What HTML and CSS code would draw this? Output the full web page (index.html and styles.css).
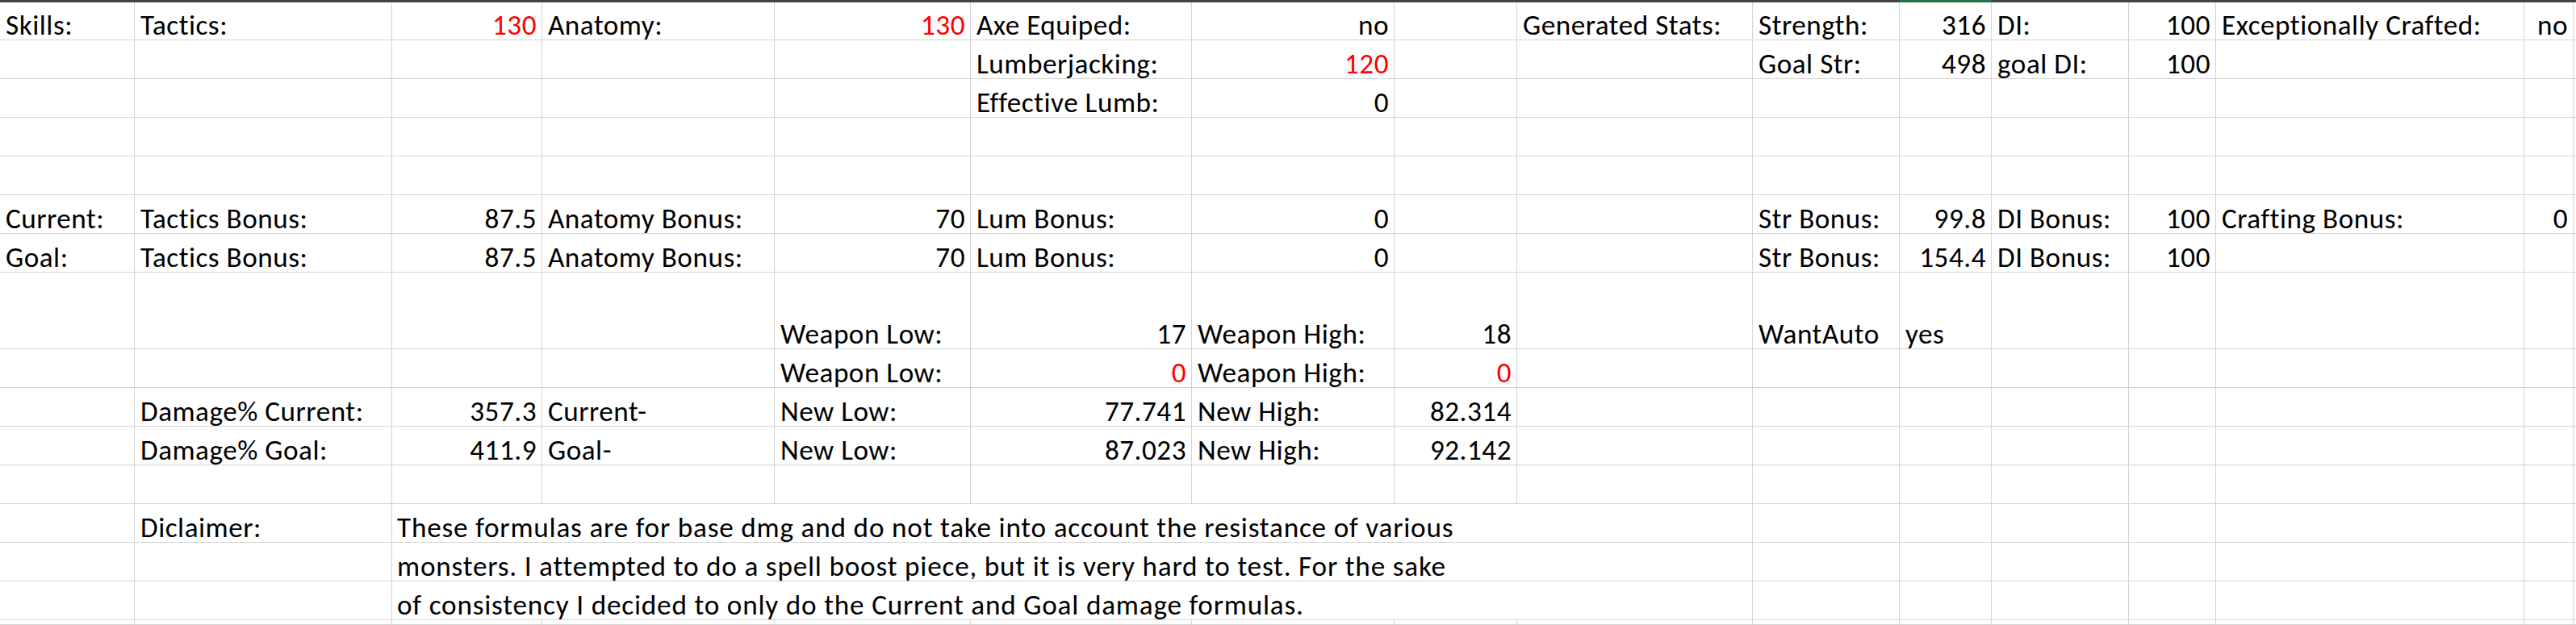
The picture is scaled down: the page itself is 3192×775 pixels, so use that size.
FILE: index.html
```html
<!DOCTYPE html>
<html lang="en">
<head>
<meta charset="utf-8">
<title>Damage sheet</title>
<link rel="stylesheet" href="styles.css">
</head>
<body>
<div class="hdr"><div class="hdr-sel"></div></div>
<div class="sheet">
  <!-- row 1 -->
  <div class="c">Skills:</div><div class="c">Tactics:</div><div class="c r red">130</div><div class="c">Anatomy:</div><div class="c r red">130</div><div class="c">Axe Equiped:</div><div class="c r">no</div><div class="c"></div><div class="c">Generated Stats:</div><div class="c">Strength:</div><div class="c r">316</div><div class="c">DI:</div><div class="c r">100</div><div class="c">Exceptionally Crafted:</div><div class="c r">no</div><div class="c"></div>
  <!-- row 2 -->
  <div class="c"></div><div class="c"></div><div class="c"></div><div class="c"></div><div class="c"></div><div class="c">Lumberjacking:</div><div class="c r red">120</div><div class="c"></div><div class="c"></div><div class="c">Goal Str:</div><div class="c r">498</div><div class="c">goal DI:</div><div class="c r">100</div><div class="c"></div><div class="c"></div><div class="c"></div>
  <!-- row 3 -->
  <div class="c"></div><div class="c"></div><div class="c"></div><div class="c"></div><div class="c"></div><div class="c">Effective Lumb:</div><div class="c r">0</div><div class="c"></div><div class="c"></div><div class="c"></div><div class="c"></div><div class="c"></div><div class="c"></div><div class="c"></div><div class="c"></div><div class="c"></div>
  <!-- row 4 -->
  <div class="c"></div><div class="c"></div><div class="c"></div><div class="c"></div><div class="c"></div><div class="c"></div><div class="c"></div><div class="c"></div><div class="c"></div><div class="c"></div><div class="c"></div><div class="c"></div><div class="c"></div><div class="c"></div><div class="c"></div><div class="c"></div>
  <!-- row 5 -->
  <div class="c"></div><div class="c"></div><div class="c"></div><div class="c"></div><div class="c"></div><div class="c"></div><div class="c"></div><div class="c"></div><div class="c"></div><div class="c"></div><div class="c"></div><div class="c"></div><div class="c"></div><div class="c"></div><div class="c"></div><div class="c"></div>
  <!-- row 6 -->
  <div class="c">Current:</div><div class="c">Tactics Bonus:</div><div class="c r">87.5</div><div class="c">Anatomy Bonus:</div><div class="c r">70</div><div class="c">Lum Bonus:</div><div class="c r">0</div><div class="c"></div><div class="c"></div><div class="c">Str Bonus:</div><div class="c r">99.8</div><div class="c">DI Bonus:</div><div class="c r">100</div><div class="c">Crafting Bonus:</div><div class="c r">0</div><div class="c"></div>
  <!-- row 7 -->
  <div class="c">Goal:</div><div class="c">Tactics Bonus:</div><div class="c r">87.5</div><div class="c">Anatomy Bonus:</div><div class="c r">70</div><div class="c">Lum Bonus:</div><div class="c r">0</div><div class="c"></div><div class="c"></div><div class="c">Str Bonus:</div><div class="c r">154.4</div><div class="c">DI Bonus:</div><div class="c r">100</div><div class="c"></div><div class="c"></div><div class="c"></div>
  <!-- row 8 (tall) -->
  <div class="c"></div><div class="c"></div><div class="c"></div><div class="c"></div><div class="c">Weapon Low:</div><div class="c r">17</div><div class="c">Weapon High:</div><div class="c r">18</div><div class="c"></div><div class="c">WantAuto</div><div class="c">yes</div><div class="c"></div><div class="c"></div><div class="c"></div><div class="c"></div><div class="c"></div>
  <!-- row 9 -->
  <div class="c"></div><div class="c"></div><div class="c"></div><div class="c"></div><div class="c">Weapon Low:</div><div class="c r red">0</div><div class="c">Weapon High:</div><div class="c r red">0</div><div class="c"></div><div class="c"></div><div class="c"></div><div class="c"></div><div class="c"></div><div class="c"></div><div class="c"></div><div class="c"></div>
  <!-- row 10 -->
  <div class="c"></div><div class="c">Damage% Current:</div><div class="c r">357.3</div><div class="c">Current-</div><div class="c">New Low:</div><div class="c r">77.741</div><div class="c">New High:</div><div class="c r">82.314</div><div class="c"></div><div class="c"></div><div class="c"></div><div class="c"></div><div class="c"></div><div class="c"></div><div class="c"></div><div class="c"></div>
  <!-- row 11 -->
  <div class="c"></div><div class="c">Damage% Goal:</div><div class="c r">411.9</div><div class="c">Goal-</div><div class="c">New Low:</div><div class="c r">87.023</div><div class="c">New High:</div><div class="c r">92.142</div><div class="c"></div><div class="c"></div><div class="c"></div><div class="c"></div><div class="c"></div><div class="c"></div><div class="c"></div><div class="c"></div>
  <!-- row 12 -->
  <div class="c"></div><div class="c"></div><div class="c"></div><div class="c"></div><div class="c"></div><div class="c"></div><div class="c"></div><div class="c"></div><div class="c"></div><div class="c"></div><div class="c"></div><div class="c"></div><div class="c"></div><div class="c"></div><div class="c"></div><div class="c"></div>
  <!-- row 13 -->
  <div class="c"></div><div class="c">Diclaimer:</div><div class="c note">These formulas are for base dmg and do not take into account the resistance of various</div><div class="c"></div><div class="c"></div><div class="c"></div><div class="c"></div><div class="c"></div><div class="c"></div><div class="c"></div>
  <!-- row 14 -->
  <div class="c"></div><div class="c"></div><div class="c note">monsters. I attempted to do a spell boost piece, but it is very hard to test. For the sake</div><div class="c"></div><div class="c"></div><div class="c"></div><div class="c"></div><div class="c"></div><div class="c"></div><div class="c"></div>
  <!-- row 15 -->
  <div class="c"></div><div class="c"></div><div class="c note">of consistency I decided to only do the Current and Goal damage formulas.</div><div class="c"></div><div class="c"></div><div class="c"></div><div class="c"></div><div class="c"></div><div class="c"></div><div class="c"></div>
  <!-- row 16 -->
  <div class="c"></div><div class="c"></div><div class="c"></div><div class="c"></div><div class="c"></div><div class="c"></div><div class="c"></div><div class="c"></div><div class="c"></div><div class="c"></div><div class="c"></div><div class="c"></div><div class="c"></div><div class="c"></div><div class="c"></div><div class="c"></div>
</div>
</body>
</html>
```

FILE: styles.css
```css
html, body {
  margin: 0;
  padding: 0;
  background: #ffffff;
}
body {
  width: 3192px;
  height: 775px;
  overflow: hidden;
  font-family: Carlito, Calibri, Lato, "Liberation Sans", sans-serif;
  font-size: 35.2px;
  letter-spacing: 0.5px;
  color: #000000;
}
.hdr {
  height: 3px;
  background: #444444;
  display: grid;
  grid-template-columns: 2354px 114px 1fr;
}
.hdr-sel {
  grid-column: 2;
  background: #217346;
}
.sheet {
  height: 772px;
  overflow: hidden;
  display: grid;
  grid-template-columns: 167px 319px 186px 288px 243px 274px 251px 152px 292px 182px 114px 170px 108px 382px 61px 1fr;
  grid-template-rows: 47px repeat(6, 48px) 95px repeat(7, 48px) 1fr;
}
.c {
  box-sizing: border-box;
  border-right: 1px solid #d4d4d4;
  border-bottom: 1px solid #d4d4d4;
  display: flex;
  align-items: flex-end;
  padding: 0 6px 1px 7px;
  line-height: 1;
  white-space: nowrap;
  overflow: visible;
  min-height: 0;
}
.r {
  justify-content: flex-end;
}
.red {
  color: #ff0000;
}
.note {
  grid-column: span 7;
  padding-left: 6px;
  letter-spacing: 0.8px;
}
```
